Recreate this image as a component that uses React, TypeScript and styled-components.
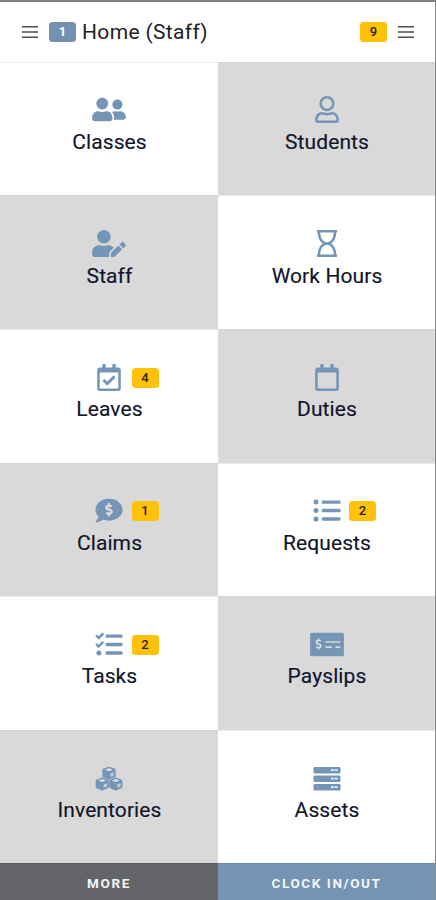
import React from "react";
import styled, { createGlobalStyle } from "styled-components";
import type { IconType } from "react-icons";
import {
  FaCommentDollar,
  FaListUl,
  FaMoneyCheckAlt,
  FaRegCalendar,
  FaRegCalendarCheck,
  FaRegHourglass,
  FaRegUser,
  FaTasks,
  FaUserEdit,
  FaUserFriends,
} from "react-icons/fa";

const GlobalStyle = createGlobalStyle`
  *, *::before, *::after { box-sizing: border-box; }
  body { margin: 0; background: #fff; }
  button { font: inherit; border: 0; padding: 0; cursor: pointer; }
`;

const Screen = styled.div`
  width: 436px;
  height: 900px;
  display: flex;
  flex-direction: column;
  border-top: 2px solid #808080;
  border-right: 1px solid #8b8b8b;
  background: #fff;
  font-family: Roboto, "Liberation Sans", sans-serif;
  color: #10152a;
  overflow: hidden;
`;

const Header = styled.header`
  flex: none;
  height: 59.6px;
  display: flex;
  align-items: center;
  padding: 0 21px 0 22px;
`;

const MenuButton = styled.button`
  display: flex;
  background: none;
  color: #4d4d4d;
`;

const Title = styled.h1`
  flex: 1;
  margin: 0 0 0 6px;
  font-size: 21px;
  line-height: 28px;
  font-weight: 400;
  letter-spacing: 0.35px;
  color: #222;
`;

const Badge = styled.span<{ $tone?: "blue" | "amber" }>`
  display: flex;
  align-items: center;
  justify-content: center;
  width: 27px;
  height: 20px;
  border-radius: 3.5px;
  background: ${(p) => (p.$tone === "blue" ? "#7392b3" : "#ffc20a")};
  color: ${(p) => (p.$tone === "blue" ? "#fff" : "#29230f")};
  font-size: 13px;
  line-height: 20px;
  font-weight: ${(p) => (p.$tone === "blue" ? 700 : 500)};
`;

const LeftBadge = styled(Badge)`
  margin-left: 11px;
`;

const RightBadge = styled(Badge)`
  margin-right: 11px;
`;

const Grid = styled.main`
  flex: 1;
  display: grid;
  grid-template-columns: 218px 217px;
  grid-template-rows: repeat(6, 1fr);
`;

const Tile = styled.button<{ $shaded: boolean }>`
  display: flex;
  flex-direction: column;
  align-items: center;
  padding-top: 33.8px;
  background: ${(p) => (p.$shaded ? "#d9d9d9" : "#fff")};
  border-top: 1px solid ${(p) => (p.$shaded ? "#d3d3d3" : "#ececec")};
  color: inherit;
`;

const IconSlot = styled.span`
  position: relative;
  display: flex;
  height: 27px;
  color: #7595b7;
`;

const TileBadge = styled(Badge)`
  position: absolute;
  top: 4px;
  left: calc(50% + 22.5px);
`;

const Label = styled.span`
  margin-top: 4.5px;
  padding-left: 1px;
  font-size: 21px;
  line-height: 28px;
  letter-spacing: 0.1px;
  -webkit-text-stroke: 0.15px currentColor;
  white-space: nowrap;
`;

const Footer = styled.footer`
  flex: none;
  height: 36.6px;
  display: grid;
  grid-template-columns: 218px 217px;
`;

const FooterButton = styled.button<{ $primary?: boolean }>`
  padding-top: 1.5px;
  background: ${(p) => (p.$primary ? "#7594b4" : "#646569")};
  border-top: 1px solid ${(p) => (p.$primary ? "#6b87a5" : "#57585c")};
  color: #f4f6f8;
  font-size: 13.5px;
  font-weight: 700;
  letter-spacing: 1.6px;
`;

const MenuIcon = () => (
  <svg width="16" height="12" viewBox="0 0 16 12" fill="currentColor">
    <path d="M0 0h16v1.5H0zM0 5.2h16v1.5H0zM0 10.4h16v1.5H0z" />
  </svg>
);

const ServerIcon = ({ size }: { size?: string | number }) => (
  <svg width={size} height={size} viewBox="0 0 27 27" fill="none">
    {[2, 10.5, 19].map((y) => (
      <g key={y}>
        <rect y={y} width="27" height="6.4" rx="1.2" fill="currentColor" />
        <path d={`M17.5 ${y + 3.2}h6.7`} stroke="#e6edf4" strokeWidth="1.8" strokeDasharray="3 .7" />
      </g>
    ))}
  </svg>
);

const CubesIcon = ({ size }: { size?: string | number }) => (
  <svg width={size} height={size} viewBox="0 0 27 27">
    {[
      [13.5, 8],
      [6.7, 18.8],
      [20.3, 18.8],
    ].map(([x, y]) => (
      <g key={x} transform={`translate(${x} ${y})`}>
        <path
          d="M0-5.4 5.6-3.2V3.2L0 5.7-5.6 3.2V-3.2Z"
          fill="currentColor"
          stroke="currentColor"
          strokeWidth="2"
          strokeLinejoin="round"
        />
        <path d="M0-4.8 4-3.2 0-1.7-4-3.2Z" fill="#dce2e8" />
        <path d="M1.5 .6 4.7-.7V2.6L1.5 4Z" fill="#c3cfdb" />
      </g>
    ))}
  </svg>
);

interface Item {
  label: string;
  icon: IconType | typeof ServerIcon;
  count?: number;
}

const items: Item[] = [
  { label: "Classes", icon: FaUserFriends },
  { label: "Students", icon: FaRegUser },
  { label: "Staff", icon: FaUserEdit },
  { label: "Work Hours", icon: FaRegHourglass },
  { label: "Leaves", icon: FaRegCalendarCheck, count: 4 },
  { label: "Duties", icon: FaRegCalendar },
  { label: "Claims", icon: FaCommentDollar, count: 1 },
  { label: "Requests", icon: FaListUl, count: 2 },
  { label: "Tasks", icon: FaTasks, count: 2 },
  { label: "Payslips", icon: FaMoneyCheckAlt },
  { label: "Inventories", icon: CubesIcon },
  { label: "Assets", icon: ServerIcon },
];

const TileIcon = styled.span`
  display: flex;
  justify-content: center;

  svg {
    width: 34px;
    height: 27px;
  }
`;

export default function App() {
  return (
    <>
      <GlobalStyle />
      <Screen>
        <Header>
          <MenuButton aria-label="Open menu">
            <MenuIcon />
          </MenuButton>
          <LeftBadge $tone="blue">1</LeftBadge>
          <Title>Home (Staff)</Title>
          <RightBadge>9</RightBadge>
          <MenuButton aria-label="Open notifications">
            <MenuIcon />
          </MenuButton>
        </Header>
        <Grid>
          {items.map(({ label, icon: Icon, count }, i) => (
            <Tile key={label} $shaded={i % 4 === 1 || i % 4 === 2}>
              <IconSlot>
                <TileIcon>
                  <Icon size={27} />
                </TileIcon>
                {count !== undefined && <TileBadge>{count}</TileBadge>}
              </IconSlot>
              <Label>{label}</Label>
            </Tile>
          ))}
        </Grid>
        <Footer>
          <FooterButton>MORE</FooterButton>
          <FooterButton $primary>CLOCK IN/OUT</FooterButton>
        </Footer>
      </Screen>
    </>
  );
}
